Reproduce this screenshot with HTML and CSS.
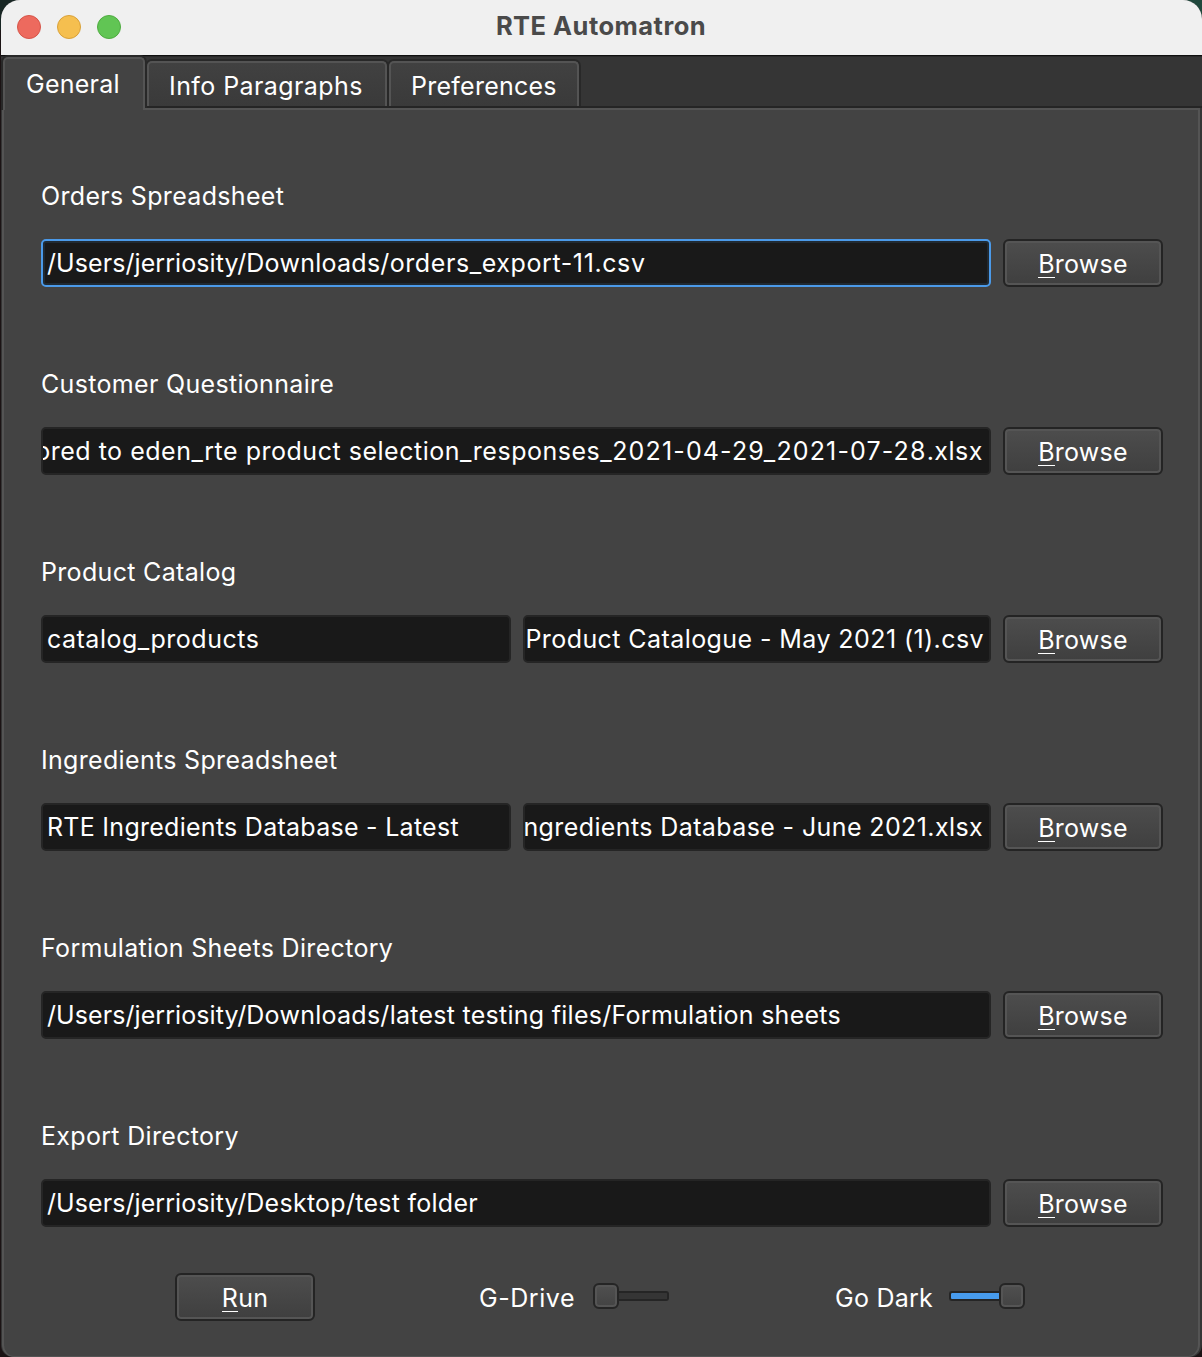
FILE: index.html
```html
<!DOCTYPE html>
<html lang="en">
<head>
<meta charset="utf-8">
<title>RTE Automatron</title>
<link rel="stylesheet" href="styles.css">
</head>
<body>
<div class="window">
  <header class="titlebar">
    <div class="lights"><span class="light close"></span><span class="light minimize"></span><span class="light zoom"></span></div>
    <h1 class="title"><span>RTE Automatron</span></h1>
  </header>
  <nav class="tabs">
    <div class="tab active"><span>General</span></div>
    <div class="tab info"><span>Info Paragraphs</span></div>
    <div class="tab prefs"><span>Preferences</span></div>
  </nav>
  <main class="panel">
    <section class="group">
      <div class="label"><span>Orders Spreadsheet</span></div>
      <div class="row"><div class="field focused"><span><span class="root">/Users/jerriosity/</span>Downloads/<span class="file">orders_export-11.csv</span></span></div><div class="button"><span><u>B</u>rowse</span></div></div>
    </section>
    <section class="group">
      <div class="label"><span>Customer Questionnaire</span></div>
      <div class="row"><div class="field end responses"><span>tailored to eden_rte product selection_responses_<span class="dates">2021-04-29_2021-07-28</span>.xlsx</span></div><div class="button"><span><u>B</u>rowse</span></div></div>
    </section>
    <section class="group">
      <div class="label"><span>Product Catalog</span></div>
      <div class="row"><div class="field half sheet"><span>catalog_products</span></div><div class="field end catalog"><span>Product Catalogue - May 2021 (1).csv</span></div><div class="button"><span><u>B</u>rowse</span></div></div>
    </section>
    <section class="group">
      <div class="label"><span>Ingredients Spreadsheet</span></div>
      <div class="row"><div class="field half"><span>RTE Ingredients Database - Latest</span></div><div class="field end"><span>Ingredients Database - June 2021.xlsx</span></div><div class="button"><span><u>B</u>rowse</span></div></div>
    </section>
    <section class="group">
      <div class="label"><span>Formulation Sheets Directory</span></div>
      <div class="row"><div class="field"><span><span class="root">/Users/jerriosity/</span>Downloads/latest testing files/Formulation sheets</span></div><div class="button"><span><u>B</u>rowse</span></div></div>
    </section>
    <section class="group">
      <div class="label"><span>Export Directory</span></div>
      <div class="row"><div class="field"><span><span class="root">/Users/jerriosity/</span>Desktop/test folder</span></div><div class="button"><span><u>B</u>rowse</span></div></div>
    </section>
    <footer class="actions">
      <div class="button run"><span><u>R</u>un</span></div>
      <div class="option drive"><span>G-Drive</span><div class="slider"><i class="knob"></i><i class="track"></i></div></div>
      <div class="option dark"><span>Go Dark</span><div class="slider on"><i class="track"></i><i class="knob"></i></div></div>
    </footer>
  </main>
</div>
</body>
</html>
```
FILE: styles.css
```css
* { box-sizing: border-box; }
body {
  margin: 0;
  height: 1357px;
  overflow: hidden;
  padding-left: 1px;
  background: linear-gradient(90deg, #182624 50%, #20483c 50%) 0 0 / 100% 30px no-repeat, #1b1314;
  font-family: Inter, "Liberation Sans", sans-serif;
  font-size: 25px;
  letter-spacing: 0.25px;
  color: #fff;
}
span { white-space: pre; }
.window {
  display: flex;
  flex-direction: column;
  height: 1357px;
  border-radius: 19px 19px 12px 12px;
  overflow: hidden;
  background: #353535;
}
.titlebar {
  display: grid;
  grid-template-columns: 160px 1fr 160px;
  flex: none;
  height: 55px;
  background: #f0f0f0;
}
.lights { display: flex; gap: 16px; padding: 15px 0 0 16px; }
.light { width: 24px; height: 24px; border-radius: 50%; border: 1px solid; }
.close { background: #ed6a5e; border-color: #d55549; }
.minimize { background: #f5bf4f; border-color: #d8a039; }
.zoom { background: #61c554; border-color: #4fab40; }
.title { margin: 0; padding-right: 1px; text-align: center; font-size: 25.5px; font-weight: 700; line-height: 52px; color: #4a4a4a; letter-spacing: 0.47px; }
.tabs {
  display: flex;
  align-items: flex-end;
  flex: none;
  height: 53px;
  padding-left: 2px;
  border-top: 1px solid #101010;
  background: #353535;
  box-shadow: inset 0 1px #2a2a2a, inset 0 -2px #252525;
}
.tab {
  height: 45px;
  margin-bottom: 2px;
  padding-left: 20px;
  border: 2px solid #545454;
  border-bottom: 0;
  border-radius: 5px 5px 0 0;
  background: linear-gradient(#414141, #3a3a3a);
  box-shadow: 0 0 0 2px #282828;
  line-height: 46px;
  clip-path: inset(-2px -2px 0 -2px);
}
.tab.active {
  position: relative;
  z-index: 1;
  width: 142px;
  height: 53px;
  margin-bottom: -2px;
  padding-left: 21px;
  background: #434343;
  line-height: 50px;
  clip-path: polygon(-2px -2px, calc(100% + 2px) -2px, calc(100% + 2px) calc(100% - 2px), 100% calc(100% - 2px), 100% 100%, -2px 100%);
}
.info { width: 240px; margin-left: 2px; letter-spacing: 0.42px; }
.prefs { width: 190px; margin-left: 2px; }
.panel {
  flex: 1;
  width: 1198px;
  margin-left: 1px;
  padding: 71px 35px 0 37px;
  border: 2px solid #545454;
  border-bottom-width: 1px;
  border-radius: 0 0 12px 12px;
  background: #434343;
}
.group { height: 188px; }
.label { height: 58px; line-height: 31px; letter-spacing: 0.32px; }
.row { display: flex; gap: 12px; }
.field {
  display: flex;
  flex: 1;
  min-width: 0;
  height: 48px;
  padding-left: 4px;
  overflow: hidden;
  border: 2px solid #252525;
  border-radius: 5px;
  background: #191919;
  line-height: 44px;
  letter-spacing: 0.27px;
}
.root { letter-spacing: 0.08px; }
.file { letter-spacing: 0.6px; }
.dates { letter-spacing: 1.15px; }
.focused { border-color: #4b9ae9; box-shadow: inset 0 0 0 2px #202a33; }
.end { justify-content: flex-end; padding: 0 6px 0 0; letter-spacing: 0.39px; }
.end.catalog { padding-right: 5px; letter-spacing: 0.42px; }
.responses { letter-spacing: 0.52px; }
.sheet { letter-spacing: 0.5px; }
.half { flex: none; width: 470px; }
.button {
  flex: none;
  width: 160px;
  height: 48px;
  border: 2px solid #242424;
  border-radius: 6px;
  background: linear-gradient(#4d4d4d, #3f3f3f);
  box-shadow: inset 0 0 0 2px #555;
  line-height: 46px;
  text-align: center;
}
.button u {
  display: inline-block;
  height: 37px;
  text-decoration: none;
  vertical-align: top;
  border-bottom: 1px solid #fff;
}
.actions { display: flex; align-items: center; height: 48px; margin-top: -36px; padding-left: 134px; }
.run { width: 140px; }
.option { display: flex; align-items: center; justify-content: space-between; width: 190px; line-height: 50px; }
.option span { padding-top: 2px; }
.drive { margin-left: 164px; letter-spacing: 0.55px; }
.dark { margin-left: 166px; }
.slider { display: flex; align-items: center; width: 76px; margin-bottom: 3px; }
.knob { width: 26px; height: 26px; border: 2px solid #252525; border-radius: 6px; background: linear-gradient(#505050, #434343); box-shadow: inset 0 0 0 2px #555; }
.track { flex: 1; height: 10px; border: 2px solid #252525; border-left: 0; border-radius: 0 3px 3px 0; background: #353535; }
.on .track { border: 2px solid #252525; border-right: 0; border-radius: 3px 0 0 3px; background: #479bed; }
```
